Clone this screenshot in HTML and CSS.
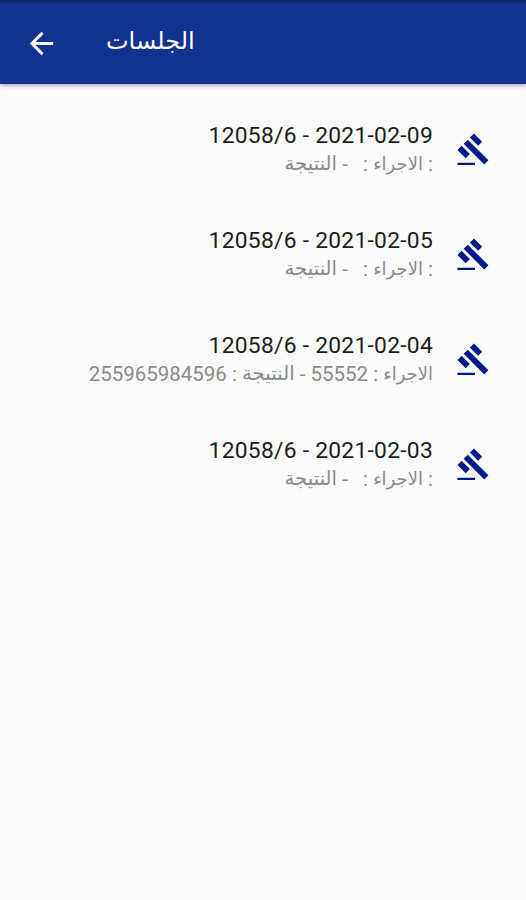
FILE: index.html
```html
<!DOCTYPE html>
<html lang="ar">
<head>
    <meta charset="UTF-8">
    <meta name="viewport" content="width=device-width, initial-scale=1.0">
    <title>الجلسات</title>
    <link rel="stylesheet" href="styles.css">
</head>
<body>
    <svg class="sprite">
        <symbol id="gavel" viewBox="0 0 24 24">
            <path d="M1 21.1h12v1.6H1zM5.245 8.07l2.83-2.827 14.14 14.142-2.828 2.828zM12.317 1l5.657 5.656-2.83 2.83-5.654-5.66zM3.825 9.485l5.657 5.657-2.828 2.828-5.657-5.657z"/>
        </symbol>
    </svg>
    <header class="barra">
        <svg class="voltar" viewBox="0 0 24 24"><path d="M20 11H7.83l5.59-5.59L12 4l-8 8 8 8 1.41-1.41L7.83 13H20v-2z"/></svg>
        <h1 class="titulo">الجلسات</h1>
    </header>

    <main class="lista">
        <div class="item">
            <div class="texto">
                <p class="data">12058/6 - 2021-02-09</p>
                <p class="detalhe"><span class="acao">الاجراء</span> :   - <span class="resultado">النتيجة</span> :</p>
            </div>
            <svg class="icone"><use href="#gavel"/></svg>
        </div>
        <div class="item">
            <div class="texto">
                <p class="data">12058/6 - 2021-02-05</p>
                <p class="detalhe"><span class="acao">الاجراء</span> :   - <span class="resultado">النتيجة</span> :</p>
            </div>
            <svg class="icone"><use href="#gavel"/></svg>
        </div>
        <div class="item">
            <div class="texto">
                <p class="data">12058/6 - 2021-02-04</p>
                <p class="detalhe"><span class="acao">الاجراء</span> : 55552 - <span class="resultado">النتيجة</span> : 255965984596</p>
            </div>
            <svg class="icone"><use href="#gavel"/></svg>
        </div>
        <div class="item">
            <div class="texto">
                <p class="data">12058/6 - 2021-02-03</p>
                <p class="detalhe"><span class="acao">الاجراء</span> :   - <span class="resultado">النتيجة</span> :</p>
            </div>
            <svg class="icone"><use href="#gavel"/></svg>
        </div>
    </main>
</body>
</html>
```
FILE: styles.css
```css
body {
    margin: 0;
    min-height: 100vh;
    background-color: #fafafa;
    font-family: Roboto, 'DejaVu Sans', sans-serif;
}

.sprite {
    display: none;
}

.barra {
    display: flex;
    align-items: center;
    box-sizing: border-box;
    height: 84px;
    padding: 3px 24px 0;
    background: linear-gradient(to bottom, #0e2465, #11338f 4px);
    box-shadow: 0 1px 5px rgba(0, 0, 0, 0.4);
}

.voltar {
    width: 35px;
    height: 35px;
    fill: #fff;
}

.titulo {
    margin: 0 0 6px 47px;
    color: #fff;
    font-size: 24px;
    font-weight: normal;
    line-height: 32px;
}

.lista {
    padding-top: 13px;
}

.item {
    display: flex;
    justify-content: flex-end;
    align-items: center;
    height: 105px;
    padding-right: 35px;
}

.texto {
    padding-bottom: 1px;
    text-align: right;
}

.data {
    margin: 0;
    color: #1c1c1c;
    font-size: 22.8px;
    letter-spacing: 0.27px;
    line-height: 30px;
}

.detalhe {
    height: 27px;
    margin: 0;
    color: #8a8a8a;
    font-size: 20.5px;
    line-height: 27px;
    white-space: pre;
}

.acao,
.resultado {
    line-height: 1;
    vertical-align: 1px;
}

.acao {
    font-size: 18px;
}

.resultado {
    font-size: 19.7px;
}

.icone {
    width: 35px;
    height: 35px;
    margin-left: 23px;
    fill: #001a8c;
}
```
